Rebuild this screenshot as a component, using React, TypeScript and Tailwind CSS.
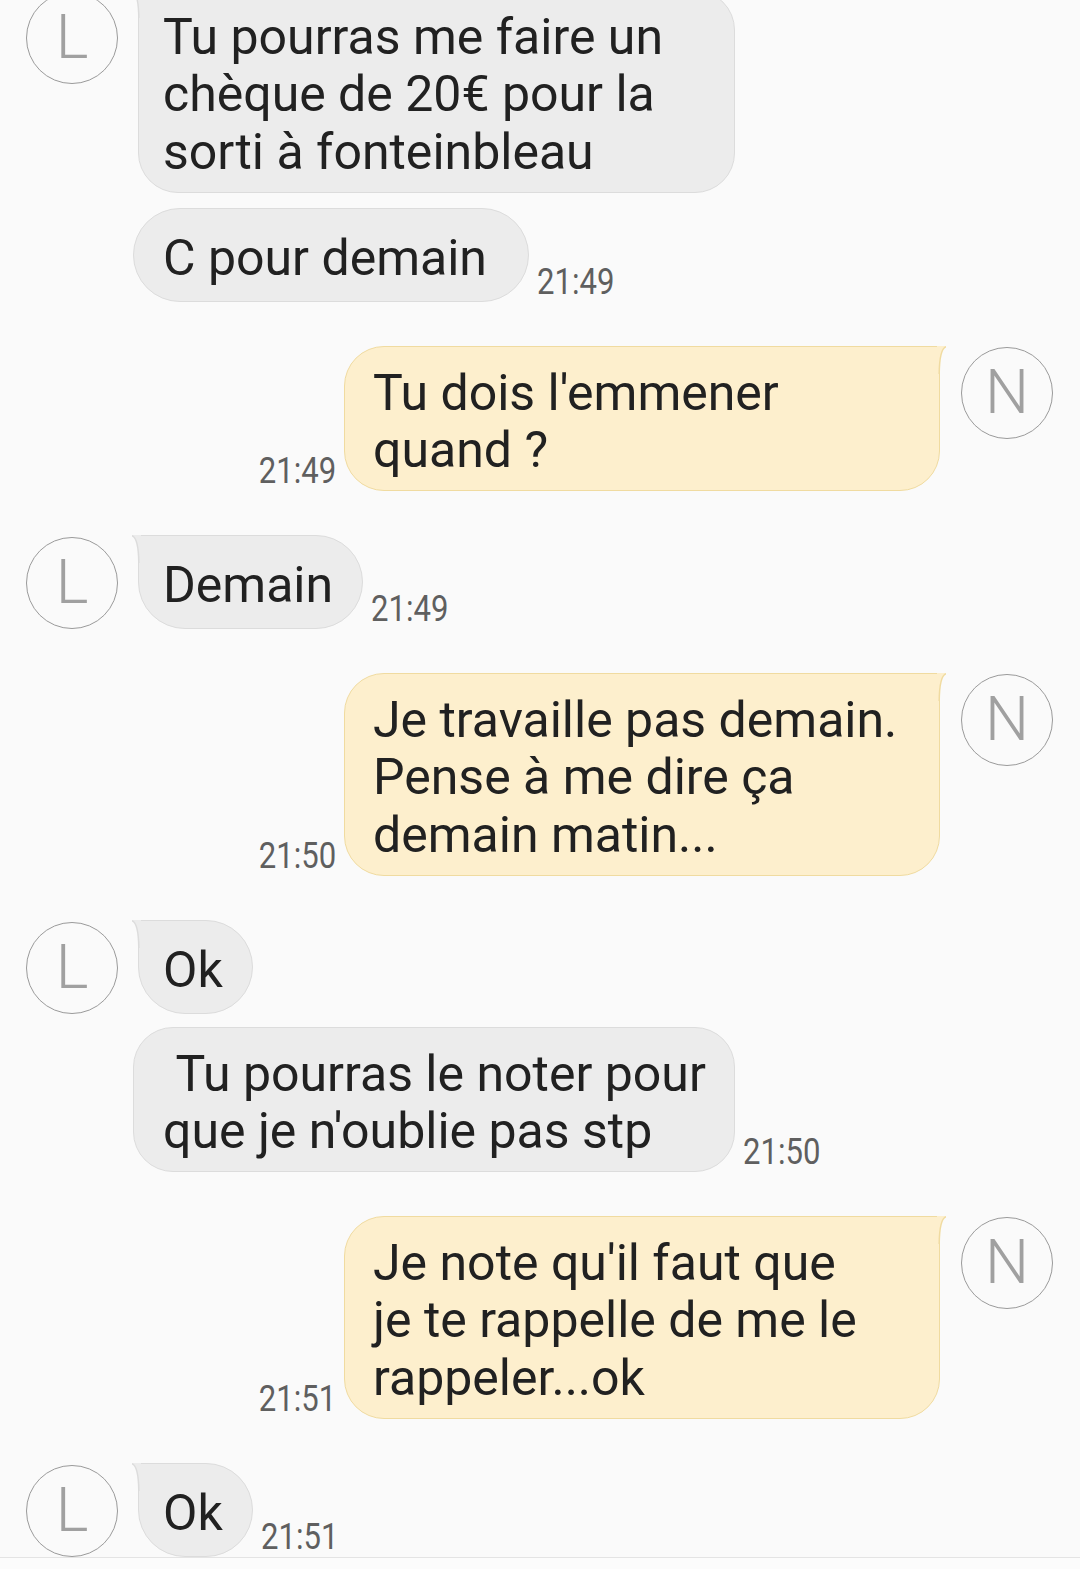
import React from "react";

type Msg = {
  from: "L" | "N";
  lines: string[];
  time?: string;
  flare?: boolean;
  avatar?: boolean;
  gap: string;
};

const HEIGHTS: Record<number, string> = {
  1: "h-[94px] rounded-[47px]",
  2: "h-[145px] rounded-[40px]",
  3: "h-[203px] rounded-[40px]",
};

const messages: Msg[] = [
  {
    from: "L",
    lines: ["Tu pourras me faire un", "chèque de 20€ pour la", "sorti à fonteinbleau"],
    flare: true,
    avatar: true,
    gap: "-mt-[10px]",
  },
  { from: "L", lines: ["C pour demain\u00a0"], time: "21:49", gap: "mt-[15px]" },
  {
    from: "N",
    lines: ["Tu dois l'emmener", "quand ?"],
    time: "21:49",
    flare: true,
    avatar: true,
    gap: "mt-[44px]",
  },
  { from: "L", lines: ["Demain"], time: "21:49", flare: true, avatar: true, gap: "mt-[44px]" },
  {
    from: "N",
    lines: ["Je travaille pas demain.", "Pense à me dire ça", "demain matin..."],
    time: "21:50",
    flare: true,
    avatar: true,
    gap: "mt-[44px]",
  },
  { from: "L", lines: ["Ok"], flare: true, avatar: true, gap: "mt-[44px]" },
  {
    from: "L",
    lines: ["\u00a0Tu pourras le noter pour", "que je n'oublie pas stp"],
    time: "21:50",
    gap: "mt-[13px]",
  },
  {
    from: "N",
    lines: ["Je note qu'il faut que", "je te rappelle de me le", "rappeler...ok"],
    time: "21:51",
    flare: true,
    avatar: true,
    gap: "mt-[44px]",
  },
  { from: "L", lines: ["Ok"], time: "21:51", flare: true, avatar: true, gap: "mt-[44px]" },
];

const Avatar = ({ letter }: { letter: string }) => (
  <div className="w-[92px] h-[92px] rounded-full border-[1.5px] border-[#9a9a9a] flex items-center justify-center">
    <span className="text-[62px] leading-none font-light text-[#a0a0a0] -mt-[2px]">{letter}</span>
  </div>
);

const Time = ({ t, side }: { t: string; side: "L" | "N" }) => (
  <span
    className={
      side === "L"
        ? "ml-[8px] mb-[2px] text-[37px] leading-none text-[#5f5f5f] scale-x-[0.84] origin-left whitespace-nowrap"
        : "mr-[8px] mb-[2px] text-[37px] leading-none text-[#5f5f5f] scale-x-[0.84] origin-right whitespace-nowrap"
    }
  >
    {t}
  </span>
);

const FlareLeft = () => (
  <svg className="absolute -left-[7px] -top-[1px]" width="9" height="28" viewBox="0 0 9 28">
    <path d="M0 0.8 Q6.5 3 6.8 28 L9 28 L9 0 L0 0 Z" fill="#ececec" />
    <path d="M0 0.8 Q6.5 3 6.8 28" fill="none" stroke="#dcdcdc" strokeWidth="1.5" />
  </svg>
);

const FlareRight = () => (
  <svg className="absolute -right-[7px] -top-[1px]" width="9" height="28" viewBox="0 0 9 28">
    <path d="M9 0.8 Q2.5 3 2.2 28 L0 28 L0 0 L9 0 Z" fill="#fdefcd" />
    <path d="M9 0.8 Q2.5 3 2.2 28" fill="none" stroke="#f0dba0" strokeWidth="1.5" />
  </svg>
);

const Incoming = ({ m }: { m: Msg }) => {
  const multi = m.lines.length > 1;
  return (
    <div className={`flex items-end pl-[26px] ${m.gap}`}>
      <div className="w-[92px] self-start mt-[2px] shrink-0">{m.avatar && <Avatar letter="L" />}</div>
      <div
        className={`relative flex flex-col justify-center border border-[#dcdcdc] bg-[#ececec] text-[#212121] text-[50px] leading-[57.5px] whitespace-nowrap pr-[29px] pt-[7px] ${
          HEIGHTS[m.lines.length]
        } ${m.flare ? "ml-[20px] pl-[24px] rounded-tl-none" : "ml-[15px] pl-[29px]"} ${
          multi ? (m.flare ? "w-[597px]" : "w-[602px]") : ""
        }`}
      >
        {m.flare && <FlareLeft />}
        {m.lines.map((l, i) => (
          <span key={i}>{l}</span>
        ))}
      </div>
      {m.time && <Time t={m.time} side="L" />}
    </div>
  );
};

const Outgoing = ({ m }: { m: Msg }) => (
  <div className={`flex items-end justify-end pr-[27px] ${m.gap}`}>
    {m.time && <Time t={m.time} side="N" />}
    <div
      className={`relative w-[596px] flex flex-col justify-center border border-[#f0dba0] bg-[#fdefcd] text-[#212121] text-[50px] leading-[57.5px] whitespace-nowrap pl-[28px] pt-[7px] rounded-tr-none ${
        HEIGHTS[m.lines.length]
      }`}
    >
      <FlareRight />
      {m.lines.map((l, i) => (
        <span key={i}>{l}</span>
      ))}
    </div>
    <div className="w-[92px] self-start mt-[1px] ml-[21px] shrink-0">{m.avatar && <Avatar letter="N" />}</div>
  </div>
);

export default function App() {
  return (
    <div className="w-[1080px] h-[1569px] bg-[#fafafa] flex flex-col overflow-hidden font-['Roboto',sans-serif]">
      <div className="h-[1557px] shrink-0 overflow-hidden flex flex-col">
        {messages.map((m, i) => (m.from === "L" ? <Incoming key={i} m={m} /> : <Outgoing key={i} m={m} />))}
      </div>
      <div className="flex-1 border-t border-[#e4e4e4] bg-[#fcfcfc]" />
    </div>
  );
}
